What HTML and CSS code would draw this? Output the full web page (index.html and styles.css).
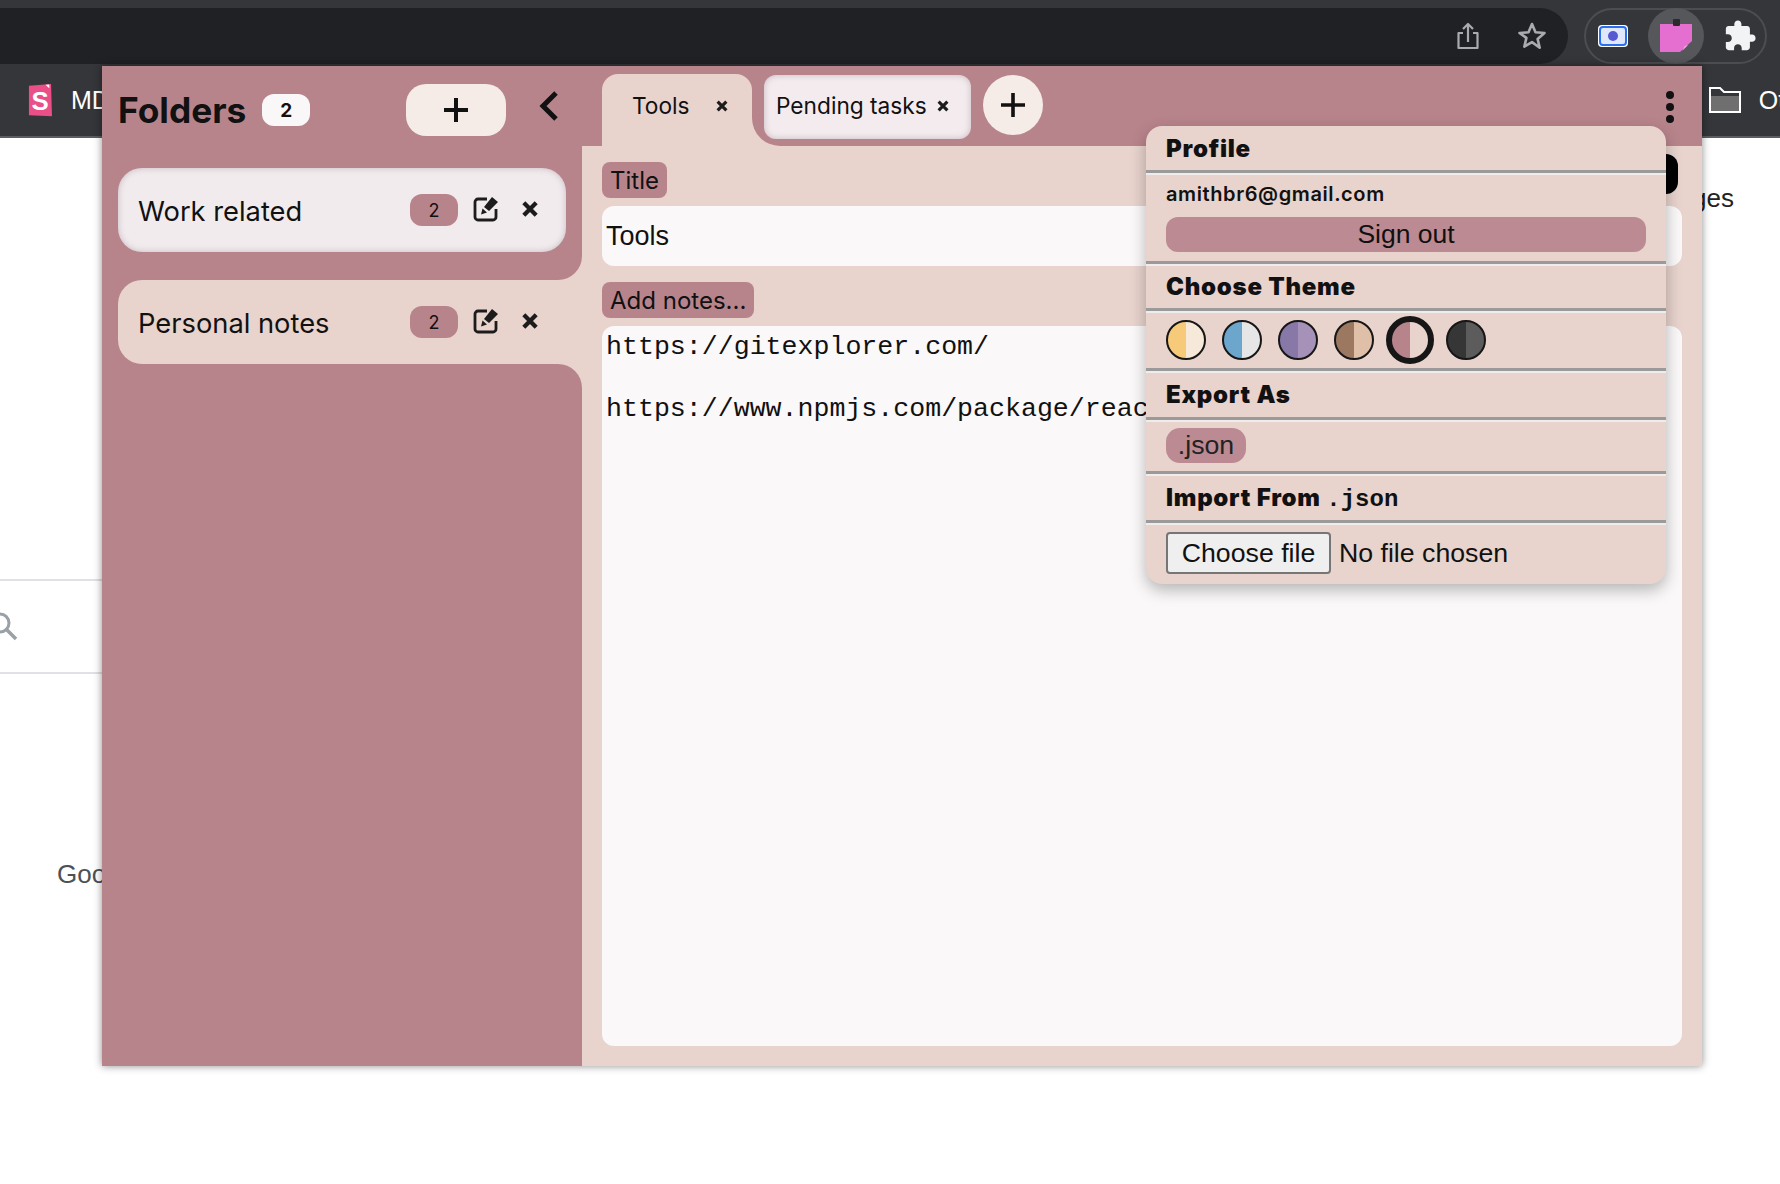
FILE: index.html
```html
<!DOCTYPE html>
<html lang="en">
<head>
  <meta charset="UTF-8" />
  <title>Sticky Notes</title>
  <link rel="stylesheet" href="styles.css">
</head>
<body>

  <!-- browser chrome -->
  <div class="toolbar">
    <div class="omnibox">
      <svg class="omni-icon" viewBox="0 0 24 30"><path d="M12 21V3M7 8l5-5 5 5M7 12H2.500v15h19V12H17" fill="none" stroke="#a9abae" stroke-width="2.200" stroke-linejoin="round"/></svg>
      <svg class="omni-icon star-icon" viewBox="0 0 30 30"><path d="M15 3l3.500 8.300 9 .7-6.900 5.900 2.100 8.800L15 21.100 7.300 25.700l2.100-8.800L2.500 12l9-.7z" fill="none" stroke="#a9abae" stroke-width="2.600" stroke-linejoin="round"/></svg>
    </div>
    <div class="ext-pill">
      <svg class="ext-shot" viewBox="0 0 32 24"><rect x="1" y="1" width="30" height="22" rx="4" fill="#fff"/><rect x="3" y="3" width="26" height="18" rx="3" fill="#dfe8fb" stroke="#2a6ff0" stroke-width="2"/><circle cx="16" cy="12" r="5" fill="#5558d0"/></svg>
      <div class="ext-active">
        <svg viewBox="0 0 34 34" width="34" height="34"><path d="M1 5h32v17L21 33H1z" fill="#e56fd0"/><path d="M23 32l3-5 3-1z" fill="#f3b5e6"/><rect x="14" y="0" width="7" height="7" rx="1" fill="#2b2b2d"/></svg>
      </div>
      <svg class="ext-puzzle" viewBox="0 0 24 24"><path d="M20.500 11H19V7c0-1.100-.9-2-2-2h-4V3.500C13 2.120 11.880 1 10.500 1S8 2.120 8 3.500V5H4c-1.100 0-1.990.9-1.990 2v3.800H3.500c1.490 0 2.700 1.210 2.700 2.700s-1.210 2.700-2.700 2.700H2V20c0 1.100.9 2 2 2h3.800v-1.500c0-1.490 1.210-2.700 2.700-2.700 1.490 0 2.700 1.210 2.700 2.700V22H17c1.100 0 2-.9 2-2v-4h1.500c1.380 0 2.500-1.120 2.500-2.500S21.880 11 20.500 11z" fill="#f1f3f4"/></svg>
    </div>
  </div>

  <div class="bookmarks">
    <svg class="bm-logo" viewBox="0 0 28 38"><path d="M2 3l24-2 1 35-25-1z" fill="#ea4f87"/><path d="M20 2l4-.3.200 4-2-1.500z" fill="#fff"/><text x="14" y="29" class="bm-logo-text">S</text></svg>
    <span class="bm-label">MD Bootstrap</span>
    <span class="bm-gap"></span>
    <svg class="bm-folder" viewBox="0 0 32 26"><path d="M1 1h10l4 4h16v20H1z" fill="#35363a" stroke="#fff" stroke-width="2"/><rect x="2" y="9" width="28" height="15" fill="#6f6f70"/></svg>
    <span class="bm-label">Other bookmarks</span>
  </div>

  <!-- page underneath -->
  <div class="page">
    <div class="page-nav">Images</div>
    <div class="page-search">
      <svg class="search-icon" viewBox="0 0 18 30"><circle cx="0" cy="11" r="9" fill="none" stroke="#9aa0a6" stroke-width="3"/><path d="M6.500 17.500L16 27" stroke="#9aa0a6" stroke-width="3.500"/></svg>
    </div>
    <div class="page-foot">Google offered in</div>
  </div>

  <!-- extension popup -->
  <div class="popup">
    <div class="sidebar">
      <div class="side-top">
        <div class="side-head">
          <span class="side-title">Folders</span>
          <span class="side-count">2</span>
          <button class="add-folder"><svg viewBox="0 0 28 28" width="28" height="28"><path d="M14 2v24M2 14h24" stroke="#111" stroke-width="4"/></svg></button>
          <svg class="chevron" viewBox="0 0 22 32"><path d="M18 3L5 16l13 13" fill="none" stroke="#111" stroke-width="5"/></svg>
        </div>
        <div class="folder folder-idle">
          <span class="folder-name">Work related</span>
          <span class="folder-count">2</span>
          <svg class="edit-icon" viewBox="0 0 26 26"><path d="M14 3H5a3 3 0 0 0-3 3v15a3 3 0 0 0 3 3h15a3 3 0 0 0 3-3v-8" fill="none" stroke="#1c1c1c" stroke-width="2.800"/><path d="M19 1l6 5-9 9-5-4zM9.500 12.500l4.500 4-6 2z" fill="#1c1c1c"/></svg>
          <svg class="x-icon" viewBox="0 0 16 16"><path d="M2.500 2.500l11 11M13.500 2.500l-11 11" stroke="#1c1c1c" stroke-width="3.800"/></svg>
        </div>
      </div>
      <div class="side-row">
        <div class="folder folder-open">
          <span class="folder-name">Personal notes</span>
          <span class="folder-count">2</span>
          <svg class="edit-icon" viewBox="0 0 26 26"><path d="M14 3H5a3 3 0 0 0-3 3v15a3 3 0 0 0 3 3h15a3 3 0 0 0 3-3v-8" fill="none" stroke="#1c1c1c" stroke-width="2.800"/><path d="M19 1l6 5-9 9-5-4zM9.500 12.500l4.500 4-6 2z" fill="#1c1c1c"/></svg>
          <svg class="x-icon" viewBox="0 0 16 16"><path d="M2.500 2.500l11 11M13.500 2.500l-11 11" stroke="#1c1c1c" stroke-width="3.800"/></svg>
        </div>
      </div>
      <div class="side-rest"></div>
    </div>

    <div class="main">
      <div class="tabbar">
        <div class="tab-lead"></div>
        <div class="tab-open">
          <div class="tab-open-inner">
            <span>Tools</span>
            <svg class="tab-x" viewBox="0 0 16 16"><path d="M3 3l10 10M13 3L3 13" stroke="#1c1c1c" stroke-width="3.600"/></svg>
          </div>
        </div>
        <div class="tab-rest">
          <div class="tab-idle">
            <span>Pending tasks</span>
            <svg class="tab-x" viewBox="0 0 16 16"><path d="M3 3l10 10M13 3L3 13" stroke="#1c1c1c" stroke-width="3.600"/></svg>
          </div>
          <button class="add-tab"><svg viewBox="0 0 28 28" width="28" height="28"><path d="M14 2v24M2 14h24" stroke="#111" stroke-width="3.600"/></svg></button>
          <span class="tab-gap"></span>
          <svg class="dots" viewBox="0 0 10 32"><circle cx="5" cy="4" r="4" fill="#111"/><circle cx="5" cy="16" r="4" fill="#111"/><circle cx="5" cy="28" r="4" fill="#111"/></svg>
        </div>
      </div>

      <div class="editor">
        <div class="save-btn"></div>
        <label class="field-label">Title</label>
        <input class="title-input" type="text" value="Tools" />
        <label class="field-label">Add notes...</label>
        <textarea class="notes" spellcheck="false">https://gitexplorer.com/

https://www.npmjs.com/package/react-beautiful-dnd</textarea>
      </div>
    </div>

    <!-- settings menu -->
    <div class="menu">
      <div class="menu-head head-first">Profile</div>
      <hr class="menu-line" />
      <div class="menu-profile">
        <div class="menu-email">amithbr6@gmail.com</div>
        <button class="signout">Sign out</button>
      </div>
      <hr class="menu-line" />
      <div class="menu-head head-short">Choose Theme</div>
      <hr class="menu-line" />
      <div class="themes">
        <span class="theme theme-yellow"></span>
        <span class="theme theme-blue"></span>
        <span class="theme theme-purple"></span>
        <span class="theme theme-brown"></span>
        <span class="theme theme-rose"></span>
        <span class="theme theme-dark"></span>
      </div>
      <hr class="menu-line" />
      <div class="menu-head">Export As</div>
      <hr class="menu-line" />
      <div class="menu-export"><button class="export-btn">.json</button></div>
      <hr class="menu-line" />
      <div class="menu-head">Import From <code class="menu-code">.json</code></div>
      <hr class="menu-line" />
      <div class="menu-import">
        <button class="file-btn">Choose file</button>
        <span class="file-name">No file chosen</span>
      </div>
    </div>
  </div>

</body>
</html>
```

FILE: styles.css
```css
* {
  box-sizing: border-box;
}
html, body {
  height: 100%;
}
body {
  margin: 0;
  background: #ffffff;
  font-family: Inter, "Liberation Sans", sans-serif;
  color: #111;
  overflow: hidden;
}
button {
  border: none;
  font-family: inherit;
  padding: 0;
}

/* browser chrome */
.toolbar {
  height: 64px;
  background: #35363a;
  padding-top: 8px;
  display: flex;
}
.omnibox {
  width: 1568px;
  height: 56px;
  background: #202124;
  border-radius: 0 28px 28px 0;
  display: flex;
  align-items: center;
  justify-content: flex-end;
  padding-right: 21px;
  gap: 37px;
}
.omni-icon {
  width: 24px;
  height: 30px;
}
.star-icon {
  width: 30px;
}
.ext-pill {
  width: 183px;
  height: 56px;
  margin-left: 16px;
  border: 2px solid #4c4d51;
  border-radius: 28px;
  display: flex;
  align-items: center;
  padding-left: 11px;
}
.ext-shot {
  width: 32px;
  height: 24px;
}
.ext-active {
  width: 56px;
  height: 56px;
  flex: none;
  margin-left: 19px;
  border-radius: 50%;
  background: #56575b;
  display: flex;
  align-items: center;
  justify-content: center;
}
.ext-puzzle {
  width: 34px;
  height: 34px;
  margin-left: 19px;
}
.bookmarks {
  height: 74px;
  background: #35363a;
  border-bottom: 2px solid #5c5d60;
  display: flex;
  align-items: center;
  padding-left: 27px;
  overflow: hidden;
  white-space: nowrap;
}
.bm-logo {
  width: 26px;
  height: 35px;
  flex: none;
}
.bm-logo-text {
  font: bold 28px "Liberation Sans", sans-serif;
  fill: #fff;
  text-anchor: middle;
}
.bm-label {
  color: #fff;
  font: 25px "Liberation Sans", sans-serif;
  margin-left: 18px;
  flex: none;
}
.bm-gap {
  width: 1485px;
  flex: none;
}
.bm-folder {
  width: 32px;
  height: 26px;
  flex: none;
}

/* page under the popup */
.page {
  position: relative;
  color: #4d5156;
  font: 26px "Liberation Sans", sans-serif;
}
.page-nav {
  color: #222;
  text-align: right;
  padding: 45px 46px 0 0;
  height: 441px;
}
.page-search {
  width: 1000px;
  height: 95px;
  border-top: 2px solid #dfe1e5;
  border-bottom: 2px solid #dfe1e5;
  display: flex;
  align-items: center;
}
.search-icon {
  width: 18px;
  height: 30px;
}
.page-foot {
  padding: 185px 0 0 57px;
  line-height: 30px;
}

/* popup */
.popup {
  position: absolute;
  left: 102px;
  top: 66px;
  width: 1600px;
  height: 1000px;
  display: flex;
  background: #e8d3cd;
  box-shadow: 0 0 8px rgba(0, 0, 0, 0.45);
}
.sidebar {
  width: 480px;
  flex: none;
  display: flex;
  flex-direction: column;
}
.side-top {
  background: #b8848c;
  padding: 0 16px 28px 16px;
  border-bottom-right-radius: 24px;
}
.side-head {
  height: 102px;
  display: flex;
  align-items: center;
}
.side-title {
  font-size: 35.300px;
  font-weight: 700;
  margin-bottom: 13px;
}
.side-count {
  width: 48px;
  height: 32px;
  margin: 0 0 14px 16px;
  border-radius: 12px;
  background: #f9f7f8;
  font-size: 19px;
  font-weight: 700;
  display: flex;
  align-items: center;
  justify-content: center;
}
.add-folder {
  width: 100px;
  height: 52px;
  margin: 0 0 14px 96px;
  border-radius: 20px;
  background: #f5ebe7;
  display: flex;
  align-items: center;
  justify-content: center;
}
.chevron {
  width: 22px;
  height: 32px;
  margin: 0 0 22px 32px;
}
.folder {
  height: 84px;
  display: flex;
  align-items: center;
  padding-left: 20px;
}
.folder-idle {
  background: #f1ebee;
  border-radius: 24px;
  box-shadow: inset 0 0 6px rgba(120, 90, 100, 0.35);
}
.side-row {
  background: #b8848c;
}
.folder-open {
  margin-left: 16px;
  background: #e8d3cd;
  border-radius: 24px 0 0 24px;
}
.folder-name {
  font-size: 27.300px;
  width: 272px;
  flex: none;
  padding-top: 2px;
}
.folder-count {
  width: 48px;
  height: 32px;
  border-radius: 12px;
  background: #b8848c;
  font-size: 18px;
  display: flex;
  align-items: center;
  justify-content: center;
  flex: none;
}
.edit-icon {
  width: 26px;
  height: 26px;
  margin: -2px 0 0 15px;
  flex: none;
}
.x-icon {
  width: 18px;
  height: 18px;
  margin: -2px 0 0 22px;
  flex: none;
}
.side-rest {
  flex: 1;
  background: #b8848c;
  border-top-right-radius: 24px;
}

/* tabs and editor */
.main {
  flex: 1;
  min-width: 0;
  display: flex;
  flex-direction: column;
}
.tabbar {
  height: 80px;
  display: flex;
  flex: none;
}
.tab-lead {
  width: 20px;
  background: #b8848c;
}
.tab-open {
  width: 150px;
  background: #b8848c;
  padding-top: 8px;
}
.tab-open-inner {
  height: 72px;
  background: #e8d3cd;
  border-radius: 16px 16px 0 0;
  display: flex;
  align-items: flex-start;
  padding: 18px 0 0 30px;
  font-size: 22.700px;
}
.tab-open-inner .tab-x {
  margin: 7px 0 0 25px;
}
.tab-x {
  width: 14px;
  height: 14px;
  flex: none;
}
.tab-rest {
  flex: 1;
  background: #b8848c;
  border-bottom-left-radius: 28px;
  display: flex;
  align-items: flex-start;
  padding: 9px 27px 0 12px;
}
.tab-idle {
  width: 207px;
  height: 64px;
  padding-bottom: 3px;
  background: #f3ebee;
  border-radius: 12px;
  box-shadow: inset 0 0 6px rgba(120, 90, 100, 0.35);
  display: flex;
  align-items: center;
  padding-left: 12px;
  font-size: 22.700px;
}
.tab-idle .tab-x {
  margin: 0 0 0 9px;
}
.add-tab {
  width: 60px;
  height: 60px;
  margin-left: 12px;
  border-radius: 50%;
  background: #f5ebe7;
  display: flex;
  align-items: center;
  justify-content: center;
}
.tab-gap {
  flex: 1;
}
.dots {
  width: 10px;
  height: 32px;
  margin-top: 16px;
}
.editor {
  position: relative;
  flex: 1;
  min-height: 0;
  display: flex;
  flex-direction: column;
  align-items: flex-start;
  padding: 16px 20px 20px 20px;
}
.save-btn {
  position: absolute;
  right: 24px;
  top: 8px;
  width: 100px;
  height: 40px;
  background: #000;
  border-radius: 12px;
}
.field-label {
  height: 36px;
  padding: 0 8px;
  background: #b8848c;
  border-radius: 8px;
  font-size: 24px;
  line-height: 38px;
  flex: none;
}
.title-input {
  width: 100%;
  height: 60px;
  margin: 8px 0 16px;
  padding: 0 4px;
  border: none;
  border-radius: 12px;
  background: #faf8f9;
  color: #111;
  font: 27px "Liberation Sans", sans-serif;
}
.notes {
  width: 100%;
  flex: 1;
  margin-top: 8px;
  padding: 6px 4px;
  border: none;
  border-radius: 12px;
  background: #faf8f9;
  color: #111;
  font: 26.600px/31.200px "Liberation Mono", monospace;
  resize: none;
  overflow: hidden;
}

/* settings menu */
.menu {
  position: absolute;
  left: 1044px;
  top: 60px;
  width: 520px;
  height: 458px;
  background: #e8d3cd;
  border-radius: 16px;
  box-shadow: 0 6px 16px rgba(0, 0, 0, 0.28);
}
.menu-head {
  height: 44px;
  padding-left: 20px;
  font-size: 24px;
  font-weight: 900;
  letter-spacing: 0.75px;
  line-height: 44px;
  white-space: nowrap;
}
.head-first {
  line-height: 46px;
}
.head-short {
  height: 42px;
  line-height: 42px;
}
.menu-code {
  font: bold 24px "Liberation Mono", monospace;
  letter-spacing: 0;
}
.menu-line {
  height: 5px;
  margin: 0;
  border: none;
  border-top: 3px solid #9a9a9a;
  border-bottom: 2px solid #f0ecec;
}
.menu-profile {
  height: 86px;
  padding: 4px 20px 0;
}
.menu-email {
  height: 38px;
  font-size: 20px;
  font-weight: 600;
  line-height: 30px;
  letter-spacing: 0.6px;
}
.signout {
  display: block;
  width: 480px;
  height: 35px;
  border-radius: 12px;
  background: #bc8a92;
  color: #111;
  font: 26.500px "Liberation Sans", sans-serif;
}
.themes {
  height: 55px;
  padding: 0 0 2px 20px;
  display: flex;
  align-items: center;
  gap: 16px;
}
.theme {
  width: 40px;
  height: 40px;
  flex: none;
  border-radius: 50%;
  border: 2px solid #161616;
}
.theme-yellow {
  background: linear-gradient(90deg, #f6ca78 50%, #f7e9d9 50%);
}
.theme-blue {
  background: linear-gradient(90deg, #6ca6cd 50%, #e6e6e6 50%);
}
.theme-purple {
  background: linear-gradient(90deg, #8878a8 50%, #a692b8 50%);
}
.theme-brown {
  background: linear-gradient(90deg, #9c7860 50%, #dfbfa8 50%);
}
.theme-rose {
  width: 48px;
  height: 48px;
  margin: 0 -4px;
  border-width: 6px;
  background: linear-gradient(90deg, #b8848c 50%, #e8d3cd 50%);
}
.theme-dark {
  background: linear-gradient(90deg, #363636 50%, #5c5c5c 50%);
}
.menu-export {
  height: 49px;
  padding: 6px 0 0 20px;
}
.export-btn {
  display: block;
  width: 80px;
  height: 35px;
  border-radius: 14px;
  background: #bc8a92;
  color: #222;
  font: 26.700px "Liberation Sans", sans-serif;
}
.menu-import {
  padding: 7px 0 0 20px;
  display: flex;
  align-items: center;
  font: 26.700px "Liberation Sans", sans-serif;
}
.file-btn {
  width: 165px;
  height: 42px;
  background: #efefef;
  border: 2px solid #767676;
  border-radius: 4px;
  color: #111;
  font: inherit;
}
.file-name {
  margin-left: 8px;
}
```
